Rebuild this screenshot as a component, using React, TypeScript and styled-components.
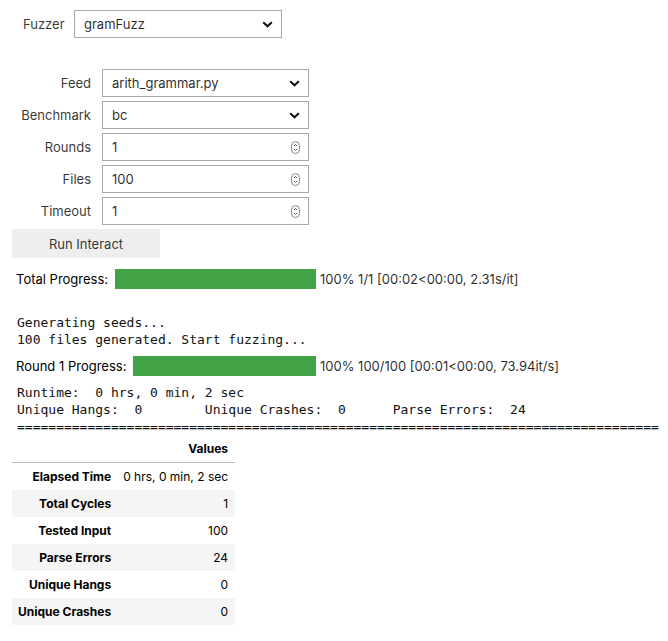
import styled, { createGlobalStyle } from "styled-components";

const GlobalStyle = createGlobalStyle`
  body {
    margin: 0;
    background: #fff;
    font-family: Inter, "Liberation Sans", sans-serif;
    font-size: 13px;
    color: #000;
  }
`;

const Wrapper = styled.div`
  width: 668px;
  display: flex;
  flex-direction: column;
  align-items: flex-start;
  padding-top: 10px;
`;

const FuzzerRow = styled.div`
  display: flex;
  align-items: center;
  height: 28px;
  padding-left: 23px;
  gap: 11px;
`;

const Form = styled.div`
  display: flex;
  flex-direction: column;
  gap: 4px;
  margin-top: 31px;
  padding-left: 12px;
`;

const FormRow = styled.div`
  display: flex;
  align-items: center;
  height: 28px;
  gap: 11px;
`;

const Label = styled.div<{ $width?: number }>`
  width: ${(p) => (p.$width ? `${p.$width}px` : "auto")};
  text-align: right;
  color: rgba(0, 0, 0, 0.8);
  white-space: nowrap;
`;

const Field = styled.div<{ $width: number }>`
  box-sizing: border-box;
  width: ${(p) => p.$width}px;
  height: 28px;
  border: 1px solid #a9a9a9;
  display: flex;
  align-items: center;
  justify-content: space-between;
  padding: 0 8px 0 9px;
  color: rgba(0, 0, 0, 0.85);
  background: #fff;
`;

const Button = styled.button`
  box-sizing: border-box;
  width: 148px;
  height: 29px;
  border: none;
  background: #eeeeee;
  font-family: inherit;
  font-size: 13px;
  color: rgba(0, 0, 0, 0.8);
  padding: 0;
`;

const ProgressRow = styled.div<{ $top: number }>`
  display: flex;
  align-items: center;
  height: 20px;
  margin-top: ${(p) => p.$top}px;
  padding-left: 16px;
`;

const ProgressLeft = styled.div`
  width: 300px;
  display: flex;
  align-items: center;
  gap: 7px;
`;

const Bar = styled.div`
  flex: 1;
  height: 20px;
  background: #43a447;
`;

const ProgressText = styled.div`
  margin-left: 4px;
  white-space: nowrap;
  color: rgba(0, 0, 0, 0.85);
`;

const Mono = styled.pre<{ $top: number }>`
  align-self: stretch;
  margin: ${(p) => p.$top}px 0 0 0;
  padding-left: 17px;
  font-family: "DejaVu Sans Mono", "Liberation Mono", monospace;
  font-size: 13px;
  line-height: 17px;
  color: #111;
  white-space: pre;
  overflow: hidden;
`;

const Table = styled.table`
  margin-left: 12px;
  border-collapse: collapse;
  border-spacing: 0;
  font-size: 12px;
  color: #000;
`;

const HeadCell = styled.th`
  height: 27px;
  padding: 0 7px 0 6px;
  text-align: right;
  font-weight: bold;
  border-bottom: 1px solid #bdbdbd;
  box-sizing: border-box;
`;

const Row = styled.tr`
  &:nth-child(even) {
    background: #f5f5f5;
  }
`;

const RowHead = styled.th`
  height: 27px;
  padding: 0 6px;
  text-align: right;
  font-weight: bold;
  white-space: nowrap;
`;

const Cell = styled.td`
  height: 27px;
  padding: 0 7px 0 6px;
  text-align: right;
  white-space: nowrap;
`;

function Chevron() {
  return (
    <svg width="11" height="7" viewBox="0 0 11 7">
      <polyline points="1.2,1.2 5.5,5.3 9.8,1.2" fill="none" stroke="#111" strokeWidth="2" />
    </svg>
  );
}

function Spinner() {
  return (
    <svg width="9" height="13" viewBox="0 0 9 13">
      <rect x="0.5" y="0.5" width="8" height="12" rx="4" fill="#fff" stroke="#8a8a8a" />
      <polyline points="3,5 4.5,3.5 6,5" fill="none" stroke="#444" strokeWidth="0.9" />
      <polyline points="3,8 4.5,9.5 6,8" fill="none" stroke="#444" strokeWidth="0.9" />
    </svg>
  );
}

const selects = [
  { label: "Feed", value: "arith_grammar.py" },
  { label: "Benchmark", value: "bc" },
];

const numbers = [
  { label: "Rounds", value: "1" },
  { label: "Files", value: "100" },
  { label: "Timeout", value: "1" },
];

const stats = [
  ["Elapsed Time", "0 hrs, 0 min, 2 sec"],
  ["Total Cycles", "1"],
  ["Tested Input", "100"],
  ["Parse Errors", "24"],
  ["Unique Hangs", "0"],
  ["Unique Crashes", "0"],
];

const log1 = `Generating seeds...
100 files generated. Start fuzzing...`;

const log2 = `Runtime:  0 hrs, 0 min, 2 sec
Unique Hangs:  0        Unique Crashes:  0      Parse Errors:  24
${"=".repeat(82)}`;

export default function App() {
  return (
    <Wrapper>
      <GlobalStyle />
      <FuzzerRow>
        <Label $width={40}>Fuzzer</Label>
        <Field $width={208}>
          <span>gramFuzz</span>
          <Chevron />
        </Field>
      </FuzzerRow>

      <Form>
        {selects.map((s) => (
          <FormRow key={s.label}>
            <Label $width={79}>{s.label}</Label>
            <Field $width={207}>
              <span>{s.value}</span>
              <Chevron />
            </Field>
          </FormRow>
        ))}
        {numbers.map((n) => (
          <FormRow key={n.label}>
            <Label $width={79}>{n.label}</Label>
            <Field $width={207}>
              <span>{n.value}</span>
              <Spinner />
            </Field>
          </FormRow>
        ))}
        <Button>Run Interact</Button>
      </Form>

      <ProgressRow $top={11}>
        <ProgressLeft>
          <span>Total Progress:</span>
          <Bar />
        </ProgressLeft>
        <ProgressText>100% 1/1 [00:02&lt;00:00, 2.31s/it]</ProgressText>
      </ProgressRow>

      <Mono $top={25}>{log1}</Mono>

      <ProgressRow $top={8}>
        <ProgressLeft>
          <span>Round 1 Progress:</span>
          <Bar />
        </ProgressLeft>
        <ProgressText>100% 100/100 [00:01&lt;00:00, 73.94it/s]</ProgressText>
      </ProgressRow>

      <Mono $top={8}>{log2}</Mono>

      <Table>
        <thead>
          <tr>
            <HeadCell />
            <HeadCell>Values</HeadCell>
          </tr>
        </thead>
        <tbody>
          {stats.map(([k, v]) => (
            <Row key={k}>
              <RowHead>{k}</RowHead>
              <Cell>{v}</Cell>
            </Row>
          ))}
        </tbody>
      </Table>
    </Wrapper>
  );
}
